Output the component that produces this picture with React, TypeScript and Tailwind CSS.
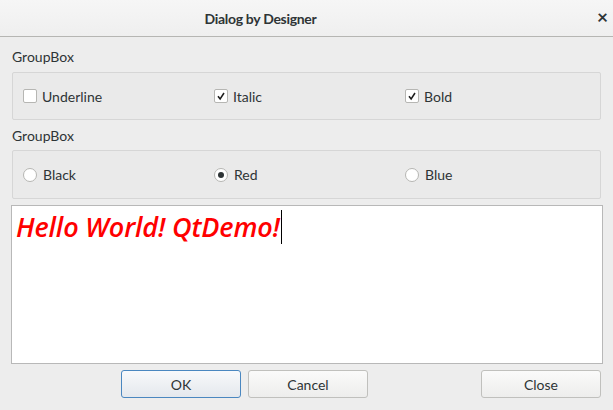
import React from 'react'

const font = { fontFamily: 'Lato, "Open Sans", sans-serif' }

function CheckBox({ label, checked }: { label: string; checked?: boolean }) {
  return (
    <div className="flex items-center gap-[5px]">
      <div className="flex h-[14px] w-[14px] items-center justify-center rounded-[2px] border border-[#b6b6b3] bg-white">
        {checked && (
          <svg viewBox="0 0 14 14" className="h-[14px] w-[14px]">
            <path d="M3.5 7.2 L6 10.5 L10.5 3.5" fill="none" stroke="#1c1c1c" strokeWidth="1.8" />
          </svg>
        )}
      </div>
      <span className="text-[14px] text-[#2e3436]">{label}</span>
    </div>
  )
}

function Radio({ label, checked }: { label: string; checked?: boolean }) {
  return (
    <div className="flex items-center gap-[6px]">
      <div className="flex h-[14px] w-[14px] items-center justify-center rounded-full border border-[#b6b6b3] bg-white">
        {checked && <div className="h-[6px] w-[6px] rounded-full bg-[#2e3436]" />}
      </div>
      <span className="text-[14px] text-[#2e3436]">{label}</span>
    </div>
  )
}

function Button({ label, primary }: { label: string; primary?: boolean }) {
  return (
    <button
      className={`h-[28px] w-[120px] rounded-[3px] border text-[14px] text-[#2e3436] ${
        primary
          ? 'border-[#4a87c0] bg-gradient-to-b from-[#f8f9fb] to-[#e4e8ed]'
          : 'border-[#c0c0bd] bg-gradient-to-b from-[#fafafa] to-[#ededec]'
      }`}
    >
      {label}
    </button>
  )
}

export default function App() {
  return (
    <div className="flex h-[410px] w-[613px] flex-col overflow-hidden bg-[#ededed]" style={font}>
      {/* title bar */}
      <div className="relative flex h-[37px] shrink-0 items-center justify-center border-b border-[#b6b6b3] bg-gradient-to-b from-[#f6f6f6] to-[#efefef] pr-[92px]">
        <span className="text-[14px] font-bold tracking-[-0.3px] text-[#2e3436]">Dialog by Designer</span>
        <span className="absolute right-[5px] top-[7px] text-[19px] font-bold leading-none text-[#2e3436]">×</span>
      </div>

      <div className="flex flex-1 flex-col px-[11px] pt-[10px]">
        <div className="pl-[1px] text-[14px] leading-[20px] text-[#2e3436]">GroupBox</div>
        <div className="ml-[1px] mt-[5px] grid h-[48px] w-[589px] grid-cols-[191px_191px_1fr] items-center rounded-[2px] border border-[#d6d6d6] bg-[#eaeaea] pl-[10px]">
          <CheckBox label="Underline" />
          <CheckBox label="Italic" checked />
          <CheckBox label="Bold" checked />
        </div>

        <div className="mt-[6px] pl-[1px] text-[14px] leading-[20px] text-[#2e3436]">GroupBox</div>
        <div className="ml-[1px] mt-[4px] grid h-[49px] w-[589px] grid-cols-[191px_191px_1fr] items-center rounded-[2px] border border-[#d6d6d6] bg-[#eaeaea] pl-[10px]">
          <Radio label="Black" />
          <Radio label="Red" checked />
          <Radio label="Blue" />
        </div>

        <div className="mt-[6px] flex h-[159px] w-[592px] items-start border border-[#b8b8b8] bg-white px-[4px] pt-[4px]">
          <span
            className="text-[27px] font-semibold italic leading-[34px] tracking-[-0.15px] text-[#ff0000]"
            style={{ fontFamily: '"Open Sans", Lato, sans-serif' }}
          >
            Hello World! QtDemo!
          </span>
          <div className="ml-[1px] h-[34px] w-[1px] bg-black" />
        </div>

        <div className="mt-[6px] flex items-center">
          <div className="ml-[110px] flex gap-[7px]">
            <Button label="OK" primary />
            <Button label="Cancel" />
          </div>
          <div className="ml-auto mr-[1px]">
            <Button label="Close" />
          </div>
        </div>
      </div>
    </div>
  )
}
